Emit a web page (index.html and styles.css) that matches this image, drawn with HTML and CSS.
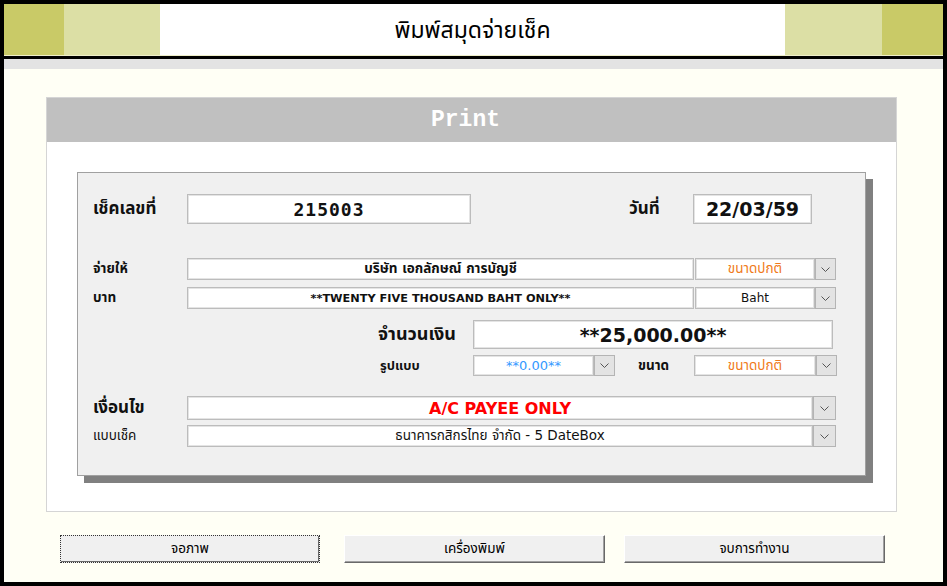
FILE: index.html
```html
<!DOCTYPE html>
<html lang="th">
<head>
  <meta charset="UTF-8" />
  <title>พิมพ์สมุดจ่ายเช็ค</title>
  <link rel="stylesheet" href="styles.css">
</head>
<body>
<div class="window">
  <div class="topbar">
    <div class="olive-dark"></div>
    <div class="olive-light"></div>
    <h1 class="title">พิมพ์สมุดจ่ายเช็ค</h1>
    <div class="olive-light right"></div>
    <div class="olive-dark right"></div>
  </div>
  <div class="topline"></div>
  <div class="blackline"></div>
  <div class="band"></div>

  <div class="content">
    <div class="panel">
      <div class="panel-head">Print</div>

      <div class="cheque">
        <div class="row r1">
          <span class="lbl big">เช็คเลขที่</span>
          <div class="field chqno">215003</div>
          <span class="lbl big date-lbl">วันที่</span>
          <div class="field date">22/03/59</div>
        </div>

        <div class="row r2">
          <span class="lbl">จ่ายให้</span>
          <div class="field wide bold">บริษัท เอกลักษณ์ การบัญชี</div>
          <div class="combo small">
            <div class="combo-text orange">ขนาดปกติ</div>
            <div class="combo-btn"><svg width="9" height="5"><path d="M0.5 0.5L4.5 4.5L8.5 0.5" fill="none" stroke="#555"/></svg></div>
          </div>
        </div>

        <div class="row r3">
          <span class="lbl">บาท</span>
          <div class="field wide bold words">**TWENTY FIVE THOUSAND BAHT ONLY**</div>
          <div class="combo small">
            <div class="combo-text en">Baht</div>
            <div class="combo-btn"><svg width="9" height="5"><path d="M0.5 0.5L4.5 4.5L8.5 0.5" fill="none" stroke="#555"/></svg></div>
          </div>
        </div>

        <div class="row r4">
          <span class="lbl mid amt-lbl">จำนวนเงิน</span>
          <div class="field amount">**25,000.00**</div>
        </div>

        <div class="row r5">
          <span class="lbl fmt-lbl">รูปแบบ</span>
          <div class="combo fmt">
            <div class="combo-text blue">**0.00**</div>
            <div class="combo-btn"><svg width="9" height="5"><path d="M0.5 0.5L4.5 4.5L8.5 0.5" fill="none" stroke="#555"/></svg></div>
          </div>
          <span class="lbl size-lbl">ขนาด</span>
          <div class="combo size">
            <div class="combo-text orange">ขนาดปกติ</div>
            <div class="combo-btn"><svg width="9" height="5"><path d="M0.5 0.5L4.5 4.5L8.5 0.5" fill="none" stroke="#555"/></svg></div>
          </div>
        </div>

        <div class="row r6">
          <span class="lbl cond">เงื่อนไข</span>
          <div class="combo full">
            <div class="combo-text red">A/C PAYEE ONLY</div>
            <div class="combo-btn"><svg width="9" height="5"><path d="M0.5 0.5L4.5 4.5L8.5 0.5" fill="none" stroke="#555"/></svg></div>
          </div>
        </div>

        <div class="row r7">
          <span class="lbl plain">แบบเช็ค</span>
          <div class="combo full">
            <div class="combo-text">ธนาคารกสิกรไทย จำกัด - 5 DateBox</div>
            <div class="combo-btn"><svg width="9" height="5"><path d="M0.5 0.5L4.5 4.5L8.5 0.5" fill="none" stroke="#555"/></svg></div>
          </div>
        </div>
      </div>
    </div>

    <div class="buttons">
      <button class="btn focus">จอภาพ</button>
      <button class="btn b2">เครื่องพิมพ์</button>
      <button class="btn b3">จบการทำงาน</button>
    </div>
  </div>
</div>
</body>
</html>
```

FILE: styles.css
```css
body {
  margin: 0;
  font-family: "DejaVu Sans", "Noto Sans Thai", "Noto Sans", sans-serif;
}
.window {
  width: 947px;
  height: 586px;
  box-sizing: border-box;
  border: 4px solid #000;
  background: #fffff5;
}
.topbar {
  display: flex;
  height: 51px;
  background: #fff;
}
.olive-dark {
  width: 60px;
  background: #c9ca67;
}
.olive-dark.right {
  width: 61px;
}
.olive-light {
  width: 96px;
  background: #dcdfa5;
}
.olive-light.right {
  width: 97px;
}
.title {
  flex: 1;
  margin: 0;
  text-align: center;
  font-size: 23px;
  font-weight: normal;
  line-height: 52px;
  color: #000;
}
.topline {
  height: 1px;
  background: #eeeec8;
}
.blackline {
  height: 3px;
  background: #000;
}
.band {
  height: 10px;
  background: #e3e3e3;
}
.content {
  padding: 28px 0 0 42px;
}
.panel {
  width: 851px;
  height: 415px;
  box-sizing: border-box;
  border: 1px solid #d5d5d5;
  background: #fff;
}
.panel-head {
  height: 44px;
  padding-right: 12px;
  background: #c0c0c0;
  color: #fff;
  text-align: center;
  font-family: "Liberation Mono", monospace;
  font-weight: bold;
  font-size: 23px;
  line-height: 45px;
}
.cheque {
  width: 789px;
  height: 304px;
  box-sizing: border-box;
  margin: 30px 0 0 30px;
  padding-left: 15px;
  border: 1px solid #a0a0a0;
  background: #f0f0f0;
  box-shadow: 7px 7px 0 #808080;
  overflow: hidden;
}
.row {
  display: flex;
  align-items: center;
}
.row > * {
  flex: none;
}
.r1 { margin-top: 21px; height: 30px; }
.r2 { margin-top: 34px; height: 22px; }
.r3 { margin-top: 7px; height: 22px; }
.r4 { margin-top: 11px; height: 29px; }
.r5 { margin-top: 6px; height: 21px; }
.r6 { margin-top: 20px; height: 24px; }
.r7 { margin-top: 5px; height: 22px; }

.lbl {
  width: 94px;
  font-size: 13.5px;
  font-weight: bold;
  color: #111;
}
.lbl.big {
  font-size: 17px;
}
.lbl.mid {
  font-size: 18px;
}
.lbl.cond {
  font-size: 17px;
}
.lbl.plain {
  font-weight: normal;
  font-size: 13.5px;
}
.date-lbl {
  width: 64px;
  margin-left: 158px;
}
.amt-lbl {
  margin-left: 285px;
  width: 95px;
}
.fmt-lbl {
  margin-left: 287px;
  width: 93px;
  font-size: 13px;
}
.size-lbl {
  margin-left: 23px;
  width: 56px;
}

.field {
  height: 100%;
  box-sizing: border-box;
  border: 1px solid #bcbcbc;
  box-shadow: inset 0 0 0 1px #e4e4e4;
  background: #fff;
  text-align: center;
  font-size: 13.5px;
  display: flex;
  align-items: center;
  justify-content: center;
  color: #111;
}
.bold {
  font-weight: bold;
}
.words {
  font-size: 11.3px;
}
.chqno {
  width: 284px;
  font-family: "DejaVu Sans Mono", monospace;
  font-weight: bold;
  font-size: 18px;
  letter-spacing: 1px;
}
.date {
  width: 119px;
  font-weight: bold;
  font-size: 19px;
}
.wide {
  width: 507px;
}
.amount {
  width: 360px;
  font-weight: bold;
  font-size: 19px;
}

.combo {
  height: 100%;
  display: flex;
  box-sizing: border-box;
}
.combo.small {
  width: 141px;
  margin-left: 1px;
}
.combo.fmt {
  width: 142px;
}
.combo.size {
  width: 143px;
}
.combo.full {
  width: 649px;
}
.combo-text {
  flex: 1;
  box-sizing: border-box;
  border: 1px solid #bcbcbc;
  box-shadow: inset 0 0 0 1px #e4e4e4;
  background: #fff;
  display: flex;
  align-items: center;
  justify-content: center;
  font-size: 13.5px;
  color: #111;
}
.combo-text.en {
  font-size: 12px;
}
.combo-btn {
  width: 21px;
  flex: none;
  box-sizing: border-box;
  border: 1px solid #b4b4b4;
  background: #e3e3e3;
  display: flex;
  align-items: center;
  justify-content: center;
}
.full .combo-btn {
  width: 23px;
}
.orange {
  color: #f07a1a;
}
.blue {
  color: #3399ff;
  font-size: 13px;
}
.red {
  color: #ff0000;
  font-weight: bold;
  font-size: 16px;
}

.buttons {
  display: flex;
  margin-top: 23px;
  margin-left: 14px;
}
.btn {
  width: 260px;
  height: 28px;
  box-sizing: border-box;
  background: #f0f0f0;
  border: 1px solid;
  border-color: #fff #696969 #696969 #fff;
  box-shadow: inset -1px -1px 0 #a0a0a0;
  font-family: "Noto Sans Thai", "DejaVu Sans", sans-serif;
  font-size: 13.5px;
  color: #000;
  padding: 0;
}
.btn.focus {
  border: 1px dotted #333;
  box-shadow: inset -1px -1px 0 #696969;
}
.b2 {
  width: 261px;
  margin-left: 24px;
}
.b3 {
  width: 261px;
  margin-left: 19px;
}
```
